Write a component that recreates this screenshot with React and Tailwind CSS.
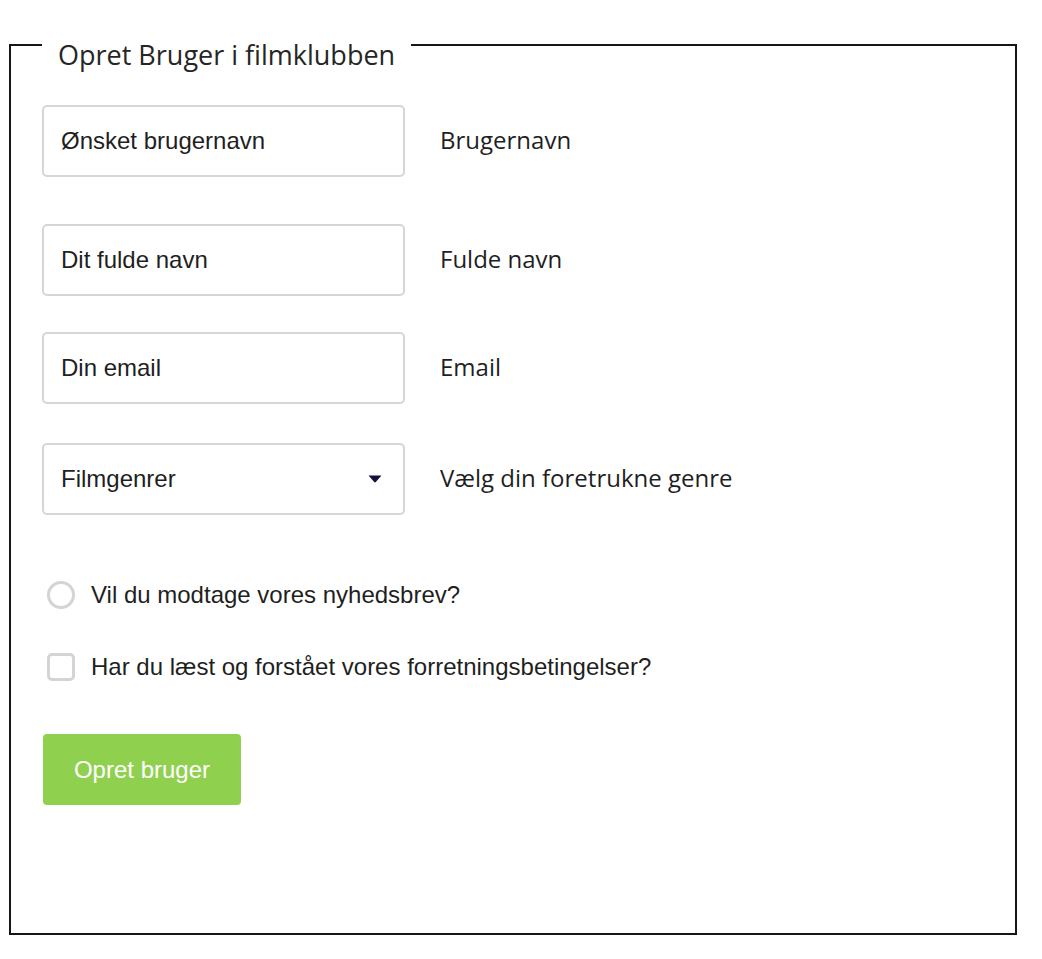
import React from 'react';

const inputClasses = "w-[363px] h-[72px] px-[17px] bg-white rounded-[5px] border-2 border-[#d6d6d6] text-[24px] text-[#1f1f1f] placeholder:text-[#1f1f1f] outline-none font-['Liberation_Sans',Arial,sans-serif]";
const labelClasses = "ml-[35px] -mt-[3px] text-[24px] text-[#1f1f1f] font-['Open_Sans',sans-serif]";

function Row({ className, children, label }) {
    return (
        <div className={`flex items-center ${className}`}>
            {children}
            <span className={labelClasses}>{label}</span>
        </div>
    );
}

export default function App() {
    return (
        <div className="min-h-screen bg-white pt-[19px]">
            <fieldset className="ml-[9px] w-[1008px] border-2 border-[#161616] pl-[31px] pb-[128px]">
                <legend className="px-4 pt-[20px] text-[27px] leading-[32px] text-[#262626] font-['Open_Sans',sans-serif]">
                    Opret Bruger i filmklubben
                </legend>

                {/* Brugernavn */}
                <Row className="mt-[34px]" label="Brugernavn">
                    <input type="text" placeholder="Ønsket brugernavn" className={inputClasses} />
                </Row>

                {/* Fulde navn */}
                <Row className="mt-[47px]" label="Fulde navn">
                    <input type="text" placeholder="Dit fulde navn" className={inputClasses} />
                </Row>

                {/* Email */}
                <Row className="mt-[36px]" label="Email">
                    <input type="email" placeholder="Din email" className={inputClasses} />
                </Row>

                {/* Genre */}
                <Row className="mt-[39px]" label="Vælg din foretrukne genre">
                    <div className={`${inputClasses} flex items-center justify-between pr-[21px]`}>
                        <span>Filmgenrer</span>
                        <svg width="14" height="8" viewBox="0 0 14 8">
                            <path d="M0.5 0.5 L13.5 0.5 L7.8 7 Q7 7.8 6.2 7 Z" fill="#14123a" />
                        </svg>
                    </div>
                </Row>

                {/* Nyhedsbrev */}
                <div className="mt-[66px] flex items-center ml-[5px] leading-[28px] font-['Liberation_Sans',Arial,sans-serif] text-[24px] text-[#1f1f1f]">
                    <span className="w-[28px] h-[28px] rounded-full border-[3px] border-[#d4d4d4]"></span>
                    <span className="ml-[16px]">Vil du modtage vores nyhedsbrev?</span>
                </div>

                {/* Betingelser */}
                <div className="mt-[44px] flex items-center ml-[5px] leading-[28px] font-['Liberation_Sans',Arial,sans-serif] text-[24px] text-[#1f1f1f]">
                    <span className="w-[28px] h-[28px] rounded-[5px] border-[3px] border-[#d4d4d4]"></span>
                    <span className="ml-[16px]">Har du læst og forstået vores forretningsbetingelser?</span>
                </div>

                <button
                    type="submit"
                    className="mt-[53px] ml-[1px] w-[198px] h-[71px] rounded-[4px] bg-[#8fd14f] text-white text-[24px] font-['Liberation_Sans',Arial,sans-serif]"
                >
                    Opret bruger
                </button>
            </fieldset>
        </div>
    );
}
